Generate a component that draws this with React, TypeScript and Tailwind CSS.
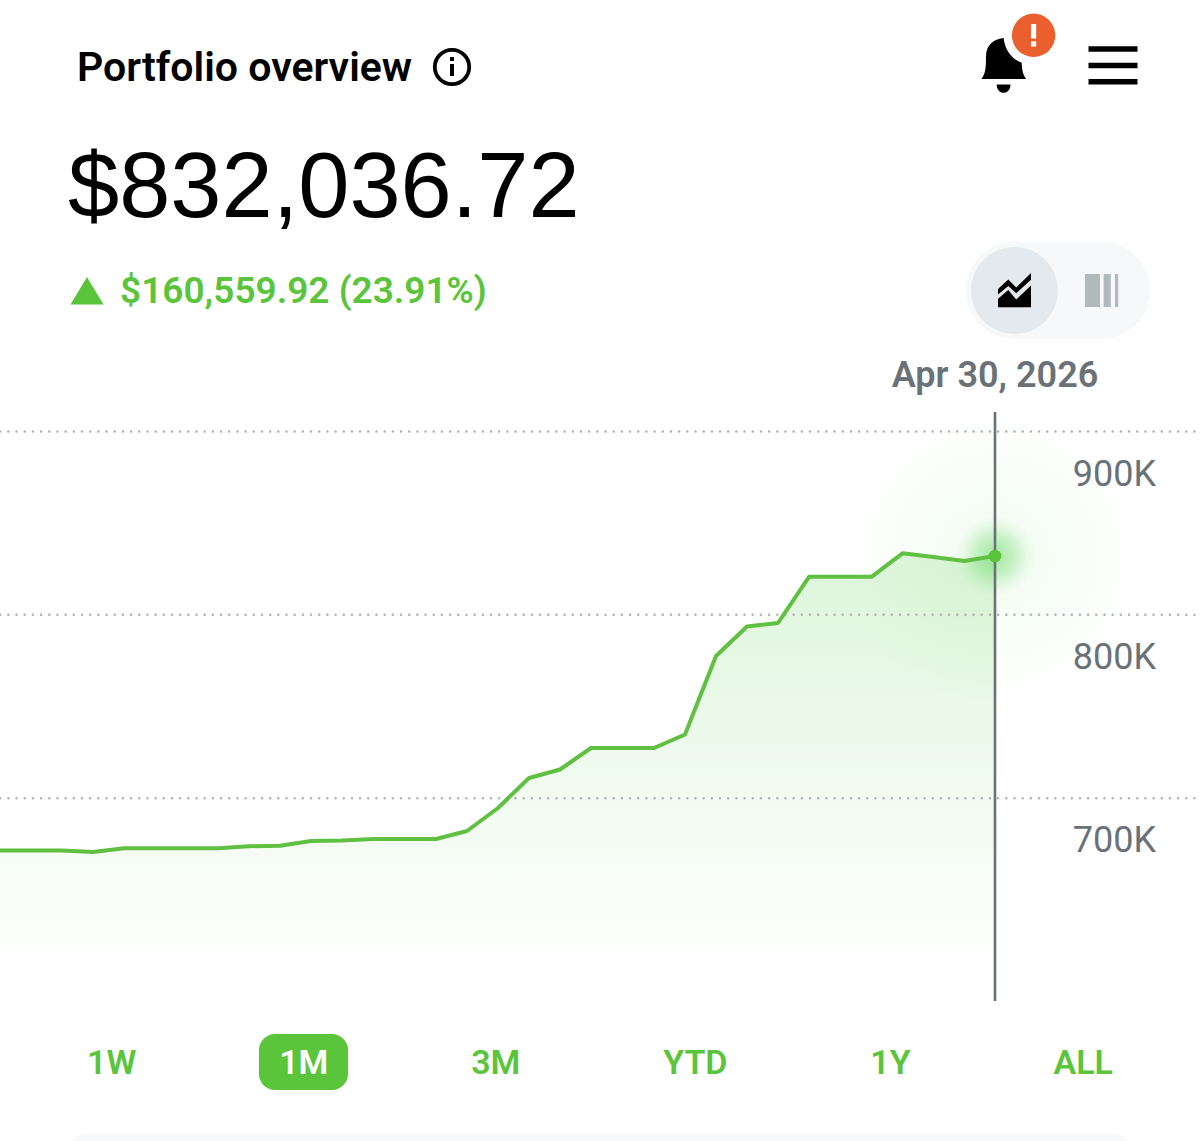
import { useState } from "react";

const POINTS: [number, number][] = [
  [0, 850.5], [62, 850.5], [93, 852], [124, 848.3], [218, 848.3], [249, 846.2],
  [280, 845.8], [311, 841], [342, 840.5], [373, 839], [436, 839], [467, 831],
  [498, 808], [529, 778], [560, 769.5], [591, 748], [654, 748], [685, 734.5],
  [716, 656], [747, 626.5], [778, 623], [809, 576.8], [871.5, 576.8],
  [902.5, 553.3], [933.5, 557], [964.5, 561], [995, 556],
];

const LINE = POINTS.map(([x, y]) => `${x},${y}`).join(" ");
const AREA = `${LINE} 995,1000 0,1000`;

const GRID = [
  { y: 431.5, label: "900K" },
  { y: 614.8, label: "800K" },
  { y: 798.3, label: "700K" },
];

const RANGES = ["1W", "1M", "3M", "YTD", "1Y", "ALL"];

function InfoIcon() {
  return (
    <svg width="40" height="40" viewBox="0 0 40 40" aria-hidden="true">
      <circle cx="20" cy="20" r="17.2" fill="none" stroke="#000" strokeWidth="3.8" />
      <rect x="18" y="10" width="4" height="4" />
      <rect x="18" y="17" width="4" height="12" />
    </svg>
  );
}

function BellIcon() {
  return (
    <svg width="76" height="80" viewBox="981 13 76 80" aria-hidden="true">
      <path d="M1003.6 38 C992 39.5 986 46 986 57 C986 67 985.5 74 981.4 79 H1026.2 C1023 75 1022 70 1021.7 62.8 C1011.5 59 1005 50 1003.6 38 Z" />
      <path d="M996.7 84.4 H1010.5 C1010.5 89.5 1007.5 92.7 1003.6 92.7 C999.7 92.7 996.7 89.5 996.7 84.4 Z" />
      <circle cx="1033.6" cy="35.3" r="21.7" fill="#eb5e2d" />
      <rect x="1031" y="24" width="5.2" height="14.5" fill="#fff" />
      <rect x="1031" y="41.3" width="5.2" height="5.2" fill="#fff" />
    </svg>
  );
}

function MenuIcon() {
  return (
    <svg width="50" height="39" viewBox="0 0 50 39" aria-hidden="true">
      <path d="M0.5 3H49.5M0.5 19.5H49.5M0.5 35.8H49.5" stroke="#000" strokeWidth="5.6" />
    </svg>
  );
}

function AreaIcon() {
  return (
    <svg width="33" height="35" viewBox="0 0 33 35" aria-hidden="true">
      <path d="M0 16 L10.3 6.6 L18.2 14.4 L33 0 V6.8 L18.2 20.2 L10.3 13 L0 21.6 Z" />
      <path d="M0 25.8 L10.3 17 L18.2 26.6 L33 12.4 V34.2 H0 Z" />
    </svg>
  );
}

function BarsIcon() {
  return (
    <svg width="34" height="33" viewBox="0 0 34 33" aria-hidden="true" fill="#b1b9bc">
      <rect width="15" height="33" />
      <rect x="18.6" width="7.2" height="33" />
      <rect x="30" width="3.2" height="33" />
    </svg>
  );
}

function BalanceChart() {
  return (
    <svg
      className="block h-auto w-full"
      viewBox="0 339 1200 663"
      role="img"
      aria-label="Portfolio value over the last month"
    >
      <defs>
        <linearGradient id="area" gradientUnits="userSpaceOnUse" x1="0" y1="553" x2="0" y2="975">
          <stop offset="0" stopColor="#4fcb42" stopOpacity="0.19" />
          <stop offset="0.5" stopColor="#4fcb42" stopOpacity="0.09" />
          <stop offset="1" stopColor="#4fcb42" stopOpacity="0" />
        </linearGradient>
        <radialGradient id="halo">
          <stop offset="0" stopColor="#4fd34a" stopOpacity="0.08" />
          <stop offset="0.5" stopColor="#4fd34a" stopOpacity="0.04" />
          <stop offset="1" stopColor="#4fd34a" stopOpacity="0" />
        </radialGradient>
        <radialGradient id="glow">
          <stop offset="0" stopColor="#4fd34a" stopOpacity="0.48" />
          <stop offset="0.45" stopColor="#4fd34a" stopOpacity="0.29" />
          <stop offset="0.8" stopColor="#4fd34a" stopOpacity="0.07" />
          <stop offset="1" stopColor="#4fd34a" stopOpacity="0" />
        </radialGradient>
      </defs>
      <polygon points={AREA} fill="url(#area)" />
      <circle cx="995" cy="556" r="150" fill="url(#halo)" />
      <circle cx="995" cy="556" r="40" fill="url(#glow)" />
      {GRID.map(({ y, label }) => (
        <g key={label}>
          <line
            x1="0.2" x2="1197" y1={y} y2={y}
            stroke="#b0b3b6" strokeWidth="2.6" strokeLinecap="round" strokeDasharray="0 8.18"
          />
          <text className="text-[36px]" x="1156" y={y + 54} textAnchor="end" fill="#6a7278">
            {label}
          </text>
        </g>
      ))}
      <polyline points={LINE} fill="none" stroke="#5fc041" strokeWidth="4" strokeLinejoin="round" />
      <line x1="995" x2="995" y1="412" y2="1001" stroke="#6a7278" strokeWidth="2.6" />
      <circle cx="995" cy="556" r="6.3" fill="#5ac53a" />
      <text className="text-[36px] font-semibold" x="995" y="387" textAnchor="middle" fill="#6a7278">
        Apr 30, 2026
      </text>
    </svg>
  );
}

export default function App() {
  const [range, setRange] = useState("1M");
  const [view, setView] = useState("chart");

  return (
    <main className="w-full bg-white font-['Roboto',sans-serif] text-black">
      <header className="flex items-end justify-between pt-[13px] pr-[62px] pl-[77px]">
        <div className="flex h-[52px] items-center gap-5">
          <h1 className="text-[41px] leading-[52px] font-semibold">Portfolio overview</h1>
          <button type="button" aria-label="About this overview">
            <InfoIcon />
          </button>
        </div>
        <div className="flex items-end gap-[31px]">
          <button type="button" aria-label="Notifications">
            <BellIcon />
          </button>
          <button type="button" aria-label="Menu" className="pb-2">
            <MenuIcon />
          </button>
        </div>
      </header>

      <p className="mt-11 pl-[68px] font-['Liberation_Sans',sans-serif] text-[92px] leading-[96px]">
        $832,036.72
      </p>

      <div className="mt-[9px] flex items-center justify-between pr-[50px] pl-[70px]">
        <p className="flex items-center gap-4 text-[37px] leading-[48px] font-semibold text-[#5ac53a]">
          <svg width="34" height="28" viewBox="0 0 34 28" fill="#5ac53a" aria-hidden="true">
            <path d="M17 0 L33.5 27.5 H0.5 Z" />
          </svg>
          $160,559.92 (23.91%)
        </p>
        <div className="flex rounded-full bg-[#f6f8fa] p-[5px]">
          <button
            type="button"
            aria-label="Line chart"
            aria-pressed={view === "chart"}
            onClick={() => setView("chart")}
            className={`flex size-[87px] items-center justify-center rounded-full ${view === "chart" ? "bg-[#e3e9ed]" : ""}`}
          >
            <AreaIcon />
          </button>
          <button
            type="button"
            aria-label="Allocation bars"
            aria-pressed={view === "bars"}
            onClick={() => setView("bars")}
            className={`flex size-[87px] items-center justify-center rounded-full ${view === "bars" ? "bg-[#e3e9ed]" : ""}`}
          >
            <BarsIcon />
          </button>
        </div>
      </div>

      <BalanceChart />

      <nav aria-label="Time range" className="mt-8 flex justify-between px-[67px]">
        {RANGES.map((r) => (
          <button
            key={r}
            type="button"
            aria-pressed={r === range}
            onClick={() => setRange(r)}
            className={`h-14 rounded-2xl px-5 text-[34px] font-semibold ${r === range ? "bg-[#5ac53a] text-white" : "text-[#5ac53a]"}`}
          >
            {r}
          </button>
        ))}
      </nav>

      <div className="mt-11 h-[7px] overflow-hidden px-[68px]">
        <div className="h-12 rounded-t-[20px] bg-[#f7f8fa]" />
      </div>
    </main>
  );
}
